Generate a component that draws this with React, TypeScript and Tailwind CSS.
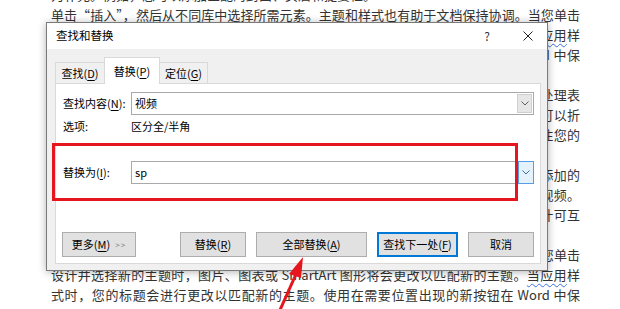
import React from "react";

const docLines: { text: React.ReactNode; full: boolean }[] = [];

const Wavy = ({ children }: { children: React.ReactNode }) => (
  <span className="underline decoration-wavy decoration-[#3b6fd6] decoration-1 underline-offset-[3px]">
    {children}
  </span>
);

const lineA = "单击“插入”，然后从不同库中选择所需元素。主题和样式也有助于文档保持协调。当您单击";
const lineB = (
  <>
    设计并选择新的主题时，图片、图表或 SmartArt 图形将会更改以匹配新的主题。<Wavy>当应用</Wavy>样
  </>
);
const lineC = "式时，您的标题会进行更改以匹配新的主题。使用在需要位置出现的新按钮在 Word 中保";

docLines.push(
  { text: "为补充。例如，您可以添加匹配的封面、页眉和提要栏。", full: false },
  { text: lineA, full: true },
  { text: lineB, full: true },
  { text: lineC, full: true },
  { text: "存时间。", full: false },
  { text: "若要更改图片适应文档的方式，请单击该图片，图片旁边将会显示布局选项按钮。当处理表", full: true },
  { text: "格时，单击要添加行或列的位置，然后单击加号。在新的阅读视图中阅读更加容易。可以折", full: true },
  { text: "叠文档某些部分并关注所需文本。如果在达到结尾处之前需要停止读取，Word 会记住您的", full: true },
  { text: "停止位置 - 即使在另一个设备上。", full: false },
  { text: "视频提供了功能强大的方法帮助您证明您的观点。当您单击联机视频时，可以在想要添加的", full: true },
  { text: "视频的嵌入代码中进行粘贴。您也可以键入一个关键字以联机搜索最适合您的文档的视频。", full: true },
  { text: "为使您的文档具有专业外观，Word 提供了页眉、页脚、封面和文本框设计，这些设计可互", full: true },
  { text: "为补充。例如，您可以添加匹配的封面、页眉和提要栏。", full: false },
  { text: lineA, full: true },
  { text: lineB, full: true },
  { text: lineC, full: true }
);

// access key, underlined like in the Windows dialog
const K = ({ children }: { children: React.ReactNode }) => (
  <span className="underline underline-offset-[2px]">{children}</span>
);

const Chevron = ({ color = "#606060" }: { color?: string }) => (
  <svg width="8" height="5" viewBox="0 0 8 5">
    <path d="M0.5 0.5 L4 4 L7.5 0.5" fill="none" stroke={color} strokeWidth="1" />
  </svg>
);

const Btn = ({
  children,
  w,
  primary,
}: {
  children: React.ReactNode;
  w: string;
  primary?: boolean;
}) => (
  <div
    className={
      primary
        ? `${w} h-[25px] flex items-center justify-center bg-[#e1e1e1] border-2 border-[#0078d7]`
        : `${w} h-[25px] flex items-center justify-center bg-[#e1e1e1] border border-[#adadad]`
    }
  >
    {children}
  </div>
);

export default function App() {
  return (
    <div className="relative w-[620px] h-[309px] overflow-hidden bg-white font-['Noto_Sans_CJK_SC',sans-serif]">
      {/* document behind the dialog */}
      <div className="-mt-[15px] pl-[51px] w-[580px] flex flex-col text-[13px] leading-[20px] text-[#333]">
        {docLines.map((l, i) => (
          <div
            key={i}
            className={l.full ? "text-justify [text-align-last:justify]" : "text-left"}
          >
            {l.text}
          </div>
        ))}
      </div>

      {/* find & replace dialog */}
      <div className="absolute left-[46px] top-[22px] w-[502px] h-[249px] flex flex-col bg-[#f0f0f0] border border-[#7a7a7a] shadow-[0_1px_8px_rgba(0,0,0,0.3)] text-[11px] text-black">
        <div className="h-[26px] bg-white flex items-center pl-[9px] pr-[14px]">
          <span className="text-[11.5px]">查找和替换</span>
          <span className="ml-auto text-[12px] text-[#333]">?</span>
          <span className="ml-[33px]">
            <svg width="10" height="10" viewBox="0 0 10 10">
              <path d="M0.5 0.5 L9.5 9.5 M9.5 0.5 L0.5 9.5" stroke="#222" strokeWidth="1" />
            </svg>
          </span>
        </div>

        <div className="flex-1 flex flex-col pl-[8px] pr-[6px] pt-[8px] pb-[6px]">
          {/* tabs */}
          <div className="h-[26px] flex items-end">
            <div className="w-[49px] h-[21px] flex items-center justify-center border-l border-t border-[#d9d9d9]">
              查找(<K>D</K>)
            </div>
            <div className="relative z-10 -mb-px w-[56px] h-[27px] flex items-center justify-center bg-white border-l border-t border-r border-[#d9d9d9]">
              替换(<K>P</K>)
            </div>
            <div className="w-[48px] h-[21px] flex items-center justify-center border-t border-r border-[#d9d9d9]">
              定位(<K>G</K>)
            </div>
          </div>

          {/* tab page */}
          <div className="flex-1 flex flex-col bg-white border border-[#d9d9d9] pl-[7px] pr-[6px] pt-[8px]">
            <div className="grid grid-cols-[68px_1fr] items-center h-[23px]">
              <span>
                查找内容(<K>N</K>):
              </span>
              <div className="h-[23px] flex items-center border border-[#a9a9a9] pl-[3px] pr-px">
                <span className="flex-1">视频</span>
                <div className="w-[15px] h-[19px] flex items-center justify-center bg-[#e6e6e6] border border-[#cfcfcf]">
                  <Chevron />
                </div>
              </div>
            </div>

            <div className="grid grid-cols-[68px_1fr] items-center h-[18px] mt-[2px]">
              <span>选项:</span>
              <span>区分全/半角</span>
            </div>

            <div className="grid grid-cols-[68px_1fr] items-center h-[23px] mt-[26px]">
              <span>
                替换为(<K>I</K>):
              </span>
              <div className="h-[23px] flex">
                <div className="flex-1 flex items-center border border-[#a9a9a9] pl-[3px]">sp</div>
                <div className="w-[16px] flex items-center justify-center bg-[#e5f1fb] border border-[#569de5]">
                  <Chevron color="#3a6ea5" />
                </div>
              </div>
            </div>

            <div className="flex items-center mt-[48px]">
              <Btn w="w-[74px] -ml-px">
                <span>
                  更多(<K>M</K>)
                </span>
                <span className="ml-[5px] text-[8px] tracking-[1px] text-[#777]">&gt;&gt;</span>
              </Btn>
              <div className="flex-1" />
              <div className="flex gap-[10px]">
                <Btn w="w-[66px]">
                  替换(<K>R</K>)
                </Btn>
                <Btn w="w-[111px]">
                  全部替换(<K>A</K>)
                </Btn>
                <Btn w="w-[81px]" primary>
                  查找下一处(<K>F</K>)
                </Btn>
                <Btn w="w-[66px]">取消</Btn>
              </div>
            </div>
          </div>
        </div>
      </div>

      {/* red annotation box */}
      <div className="absolute left-[52px] top-[143px] w-[466px] h-[58px] border-[3px] border-[#e5161e]" />

      {/* red arrow */}
      <svg className="absolute left-[270px] top-[250px]" width="50" height="59" viewBox="0 0 50 59">
        <path d="M10 60 L27 22" stroke="#e5161e" strokeWidth="3" fill="none" />
        <polygon points="33,7 19,24 31,28" fill="#e5161e" />
      </svg>
    </div>
  );
}
